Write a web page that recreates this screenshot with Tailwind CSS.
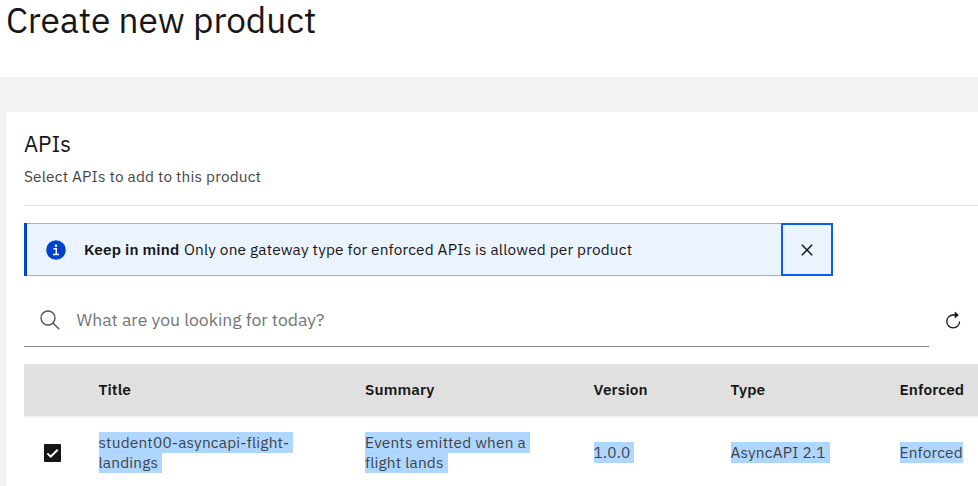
<!DOCTYPE html>
<html lang="en">
<head>
<meta charset="utf-8">
<title>Create new product</title>
<script src="https://cdn.jsdelivr.net/npm/@tailwindcss/browser@4"></script>
</head>
<body class="w-[978px] h-[486px] overflow-hidden bg-[#f3f3f3] font-['IBM_Plex_Sans',Roboto,sans-serif] text-[#161616] text-[15.4px] leading-5 tracking-[0.176px]">
<header class="h-[77px] bg-white pl-1.5">
  <h1 class="text-[35.2px] leading-[40px] whitespace-nowrap tracking-normal">Create new product</h1>
</header>
<main class="mt-[35px] ml-1.5 h-[374px] bg-white pl-[18px] flex flex-col">
  <div class="h-[94px] border-b border-[#e0e0e0] pt-[18px] shrink-0">
    <h2 class="text-[22px] leading-7 tracking-normal">APIs</h2>
    <p class="mt-2 text-[#464646]">Select APIs to add to this product</p>
  </div>
  <div class="mt-[17px] w-[809px] h-[53px] shrink-0 flex bg-[#ebf3fe] border-l-[3px] border-[#0043ce]">
    <div class="flex-1 flex items-center border-y border-[#8bb1ee] pl-[19px]">
      <svg class="size-5 mr-[18px] shrink-0" viewBox="0 0 20 20"><circle cx="10" cy="10" r="9.8" fill="#0043ce"/><circle cx="10" cy="5.7" r="1.2" fill="#fff"/><path d="M7.5 8.8h2.8v5.6M7 14.6h6" fill="none" stroke="#fff" stroke-width="1.5"/></svg>
      <p class="whitespace-nowrap flex pb-0.5"><b class="w-[100px] font-semibold">Keep in mind</b><span>Only one gateway type for enforced APIs is allowed per product</span></p>
    </div>
    <button class="w-[52px] border-2 border-[#0a5ff0] flex items-center justify-center" aria-label="Close">
      <svg class="size-3" viewBox="0 0 12 12"><path d="M.8.8l10.4 10.4M11.2.8L.8 11.2" stroke="#161616" stroke-width="1.5"/></svg>
    </button>
  </div>
  <div class="mt-[18px] h-[53px] shrink-0 flex">
    <div class="w-[905px] border-b border-[#8d8d8d] flex items-center pl-4">
      <svg class="size-5 mr-[16.5px] shrink-0" viewBox="0 0 20 20" fill="none" stroke="#525252" stroke-width="1.35"><circle cx="8" cy="8" r="7"/><path d="M13 13l6.2 6.2"/></svg>
      <span class="text-[17.6px] leading-6 text-[#757575] whitespace-nowrap tracking-normal">What are you looking for today?</span>
    </div>
    <button class="ml-4 w-4 pb-0.5 flex items-center" aria-label="Refresh">
      <svg class="w-4 h-[18px] shrink-0" viewBox="0 0 16 18"><path d="M14.6 10.4A6.4 6.4 0 1 1 8.2 4h4.5" fill="none" stroke="#161616" stroke-width="1.3"/><path d="M10 .9L13.4 4 10 7.1z" fill="#161616" stroke="#161616" stroke-width=".6"/></svg>
    </button>
  </div>
  <div class="mt-[17px] h-[54px] shrink-0 bg-[#e0e0e0] border-b-2 border-[#f3f3f3] grid grid-cols-[74.5px_266.5px_228.5px_137px_169px_78.5px] items-center pb-0.5 font-semibold whitespace-nowrap tracking-[0.1px]">
    <span></span>
    <span>Title</span>
    <span>Summary</span>
    <span>Version</span>
    <span>Type</span>
    <span>Enforced</span>
  </div>
  <div class="h-[69px] shrink-0 grid grid-cols-[74.5px_266.5px_228.5px_137px_169px_78.5px] items-center text-[#3e444a] leading-[21px] whitespace-nowrap">
    <span class="pl-5"><svg class="w-[17px] h-[18px]" viewBox="0 0 17 18"><rect width="17" height="18" rx="1" fill="#161616"/><path d="M3.4 9.4l3.3 3.3 7-7" fill="none" stroke="#fff" stroke-width="2"/></svg></span>
    <span class="flex flex-col items-start">
      <span class="h-[21px] w-[194px] bg-[#a6d2ff]/90 tracking-[0.2px]">student00-asyncapi-flight-</span>
      <span class="h-[21px] w-[63px] -mt-px bg-[#a6d2ff]/90">landings</span>
    </span>
    <span class="flex flex-col items-start">
      <span class="h-[21px] w-[165px] bg-[#a6d2ff]/90">Events emitted when a</span>
      <span class="h-[21px] w-[83px] -mt-px bg-[#a6d2ff]/90">flight lands</span>
    </span>
    <span class="h-[21px] w-[40px] bg-[#a6d2ff]/90">1.0.0</span>
    <span class="h-[21px] w-[99px] bg-[#a6d2ff]/90">AsyncAPI 2.1</span>
    <span class="h-[21px] w-[63px] bg-[#a6d2ff]/90">Enforced</span>
  </div>
</main>
</body>
</html>
